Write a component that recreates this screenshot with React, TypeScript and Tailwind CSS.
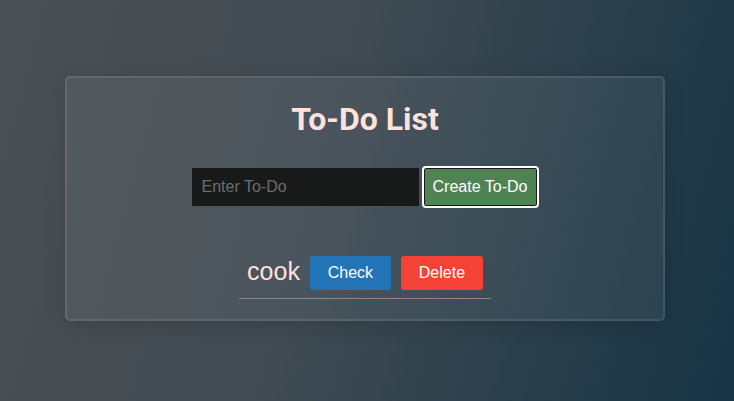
export default function App() {
  return (
    <div className="h-[401px] w-full flex items-center justify-center pr-[4px] pb-[4px] bg-[linear-gradient(105deg,#4b5053_0%,#3f4a52_45%,#173444_100%)] font-['Liberation_Sans',Arial,sans-serif]">
      <div className="w-[600px] h-[245px] flex flex-col items-center rounded-[5px] border-2 border-white/10 bg-white/[0.06] shadow-[0_4px_20px_rgba(0,0,0,0.15)]">
        <h1 className="mt-[21px] text-[32px] leading-[40px] font-bold text-[#ffe1dd] font-['Roboto',sans-serif]">
          To-Do List
        </h1>
        <div className="mt-[27px] flex items-center gap-[3px]">
          <input
            type="text"
            placeholder="Enter To-Do"
            className="w-[227px] h-[38px] px-[10px] bg-[#181a1a] text-[16px] text-white placeholder:text-[#6b6e6e] outline-none"
          />
          <button className="h-[42px] w-[117px] rounded-[4px] border-2 border-white bg-[#4f8452] text-[16px] text-white shadow-[inset_0_0_0_1px_#1a1a1a]">
            Create To-Do
          </button>
        </div>
        <ul className="mt-[48px]">
          <li className="flex items-center gap-[10px] px-[8px] pb-[8px] border-b border-[#8e8784]">
            <span className="text-[25px] text-[#ffe1dd] leading-[28px] -mt-[5px]">cook</span>
            <button className="w-[81px] h-[34px] rounded-[3px] bg-[#2374b7] text-[16px] text-white">Check</button>
            <button className="w-[82px] h-[34px] rounded-[3px] bg-[#f44336] text-[16px] text-white">Delete</button>
          </li>
        </ul>
      </div>
    </div>
  );
}
